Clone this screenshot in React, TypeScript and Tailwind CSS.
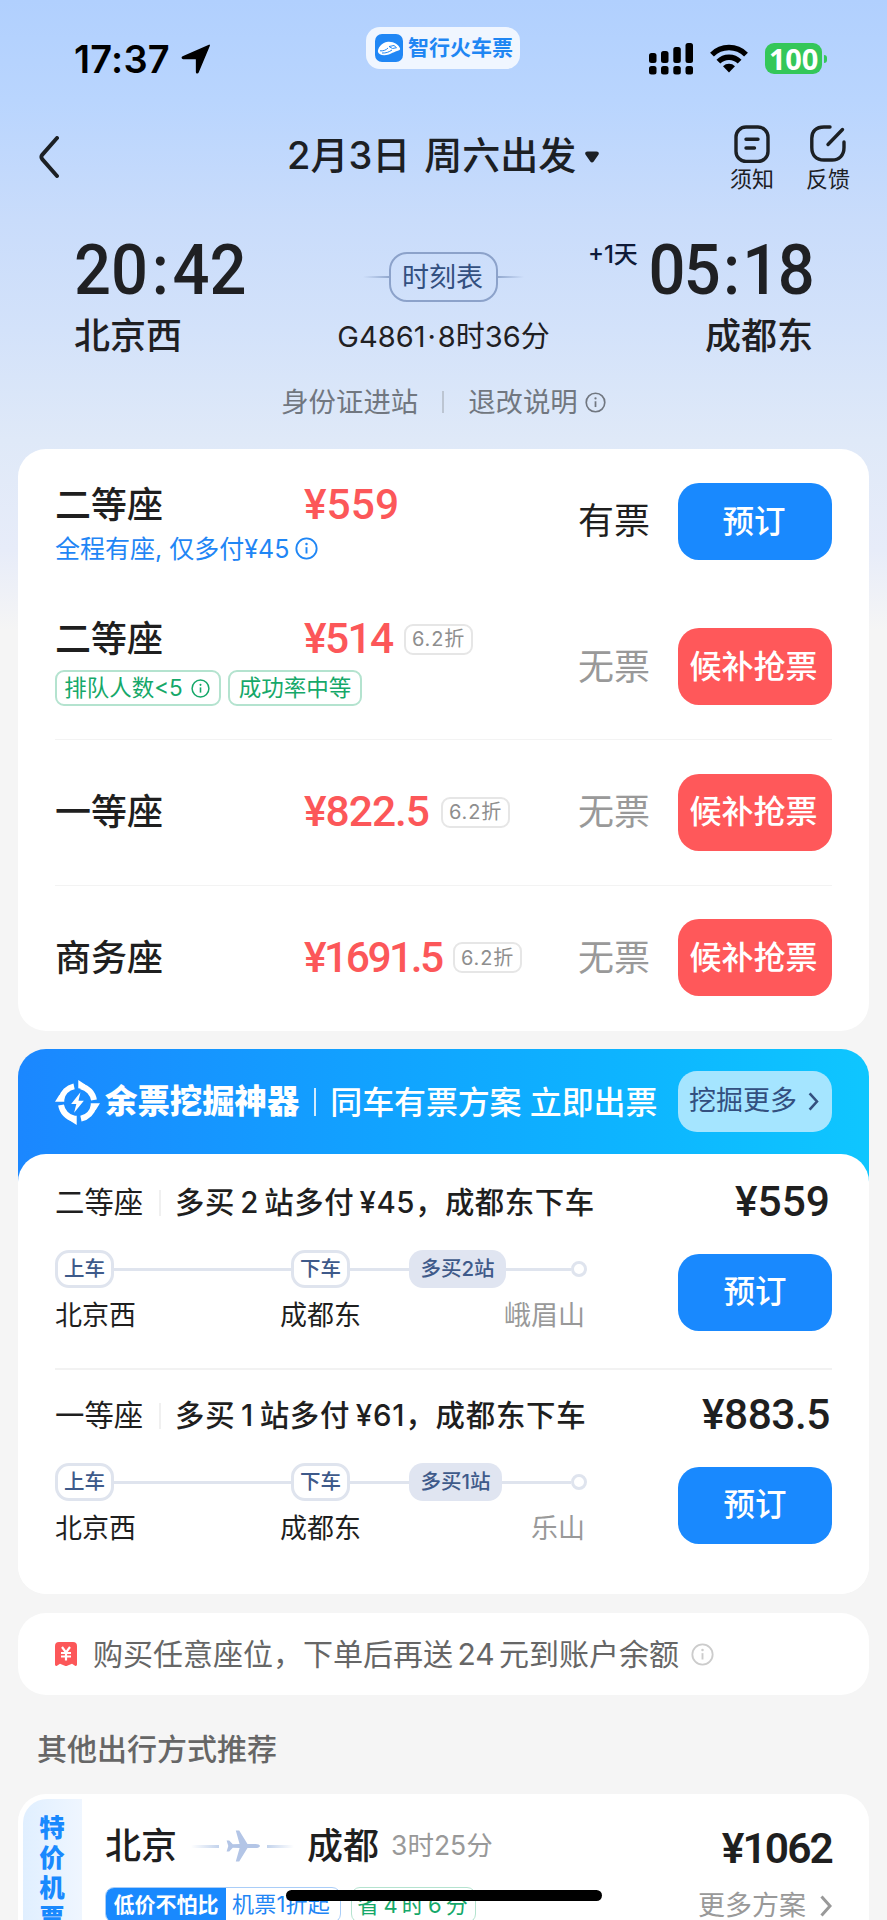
import type { ReactNode } from 'react'

interface Seat {
  name: string
  price: string
  priceClass: string
  discount?: string
  available: boolean
  extra?: ReactNode
  divider?: boolean
}

interface Plan {
  seat: string
  title: string
  titleClass: string
  price: string
  priceClass: string
  more: string
  moreClass: string
  last: string
}

function InfoIcon({ className }: { className?: string }) {
  return (
    <svg viewBox="0 0 24 24" fill="none" stroke="currentColor" strokeWidth="1.9" className={className}>
      <circle cx="12" cy="12" r="10.6" />
      <path d="M12 10.6v6.6" strokeWidth="2" />
      <circle cx="12" cy="7.4" r="1.3" fill="currentColor" stroke="none" />
    </svg>
  )
}

function Chevron({ className }: { className?: string }) {
  return (
    <svg viewBox="0 0 12 22" fill="none" stroke="currentColor" strokeWidth="3" className={className}>
      <path d="M1.5 1.5l8.5 9.5-8.5 9.5" />
    </svg>
  )
}

// Hours and minutes with a little air around the colon
function Clock({ value }: { value: string }) {
  const [hours, minutes] = value.split(':')
  return (
    <>
      {hours}
      <span className="mx-[4px]">:</span>
      {minutes}
    </>
  )
}

function StatusBar() {
  return (
    <div className="flex h-[96px] shrink-0 items-start">
      <div className="ml-[74px] mt-[37px] flex w-[292px] items-center">
        <span className="text-[38px] font-semibold leading-[44px] tracking-[0.2px] text-black">17:37</span>
        <svg viewBox="0 0 30 30" className="ml-[11px] size-[30px]">
          <path d="M28.2 1.4L17 28.2c-.4.900-1.400.800-1.400-.3V15.400a1 1 0 0 0-1-1H2.200c-1 0-1.200-1-.3-1.400z" fill="#000" stroke="#000" strokeWidth="1.500" strokeLinejoin="round" />
        </svg>
      </div>
      <div className="mt-[27px] flex h-[42px] w-[154px] items-center rounded-[14px] bg-[#f0f6ff] pl-[9px]">
        <svg viewBox="0 0 28 28" className="size-[28px]">
          <rect width="28" height="28" rx="7" fill="#2087f5" />
          <path d="M3 18c-.6-3 3-9.500 10-10.200 6-.4 10.500 2.800 12 6.400.6 1.700-.8 2.200-3 2.800-4 1.200-8 4.400-13 4.200C5.800 21 3.500 20 3 18z" fill="#fff" />
          <path d="M14 12.500l5-1 2.500 2.200-4 .8zM5 16.800c3 .4 6-.6 8-2.800M7 19c4 .3 7-1 10-3" fill="none" stroke="#2087f5" strokeWidth="1" />
        </svg>
        <span className="ml-[5px] text-[21px] font-bold leading-[30px] text-[#1f86f3]">智行火车票</span>
      </div>
      <svg viewBox="0 0 44 32" className="ml-[129px] mt-[43px] h-[32px] w-[44px]">
        <rect x="0" y="10" width="7.500" height="10" rx="2.500" />
        <rect x="12" y="8" width="7.500" height="12" rx="2.500" />
        <rect x="24.300" y="4" width="7.500" height="16" rx="2.500" />
        <rect x="36.500" y="0" width="7.500" height="20" rx="2.500" />
        <rect x="0" y="23" width="7.500" height="8.500" rx="2.500" />
        <rect x="12" y="23" width="7.500" height="8.500" rx="2.500" />
        <rect x="24.300" y="23" width="7.500" height="8.500" rx="2.500" />
        <rect x="36.500" y="23" width="7.500" height="8.500" rx="2.500" />
      </svg>
      <svg viewBox="0 0 38 29" className="ml-[17px] mt-[44px] h-[29px] w-[38px]" fill="none" stroke="#000" strokeWidth="5.400">
        <path d="M2 10.600a24 24 0 0 1 34 0" />
        <path d="M8.400 17.600a15 15 0 0 1 21.200 0" />
        <path d="M19 28.500l-6-6.300a8.600 8.600 0 0 1 12 0z" fill="#000" stroke="none" />
      </svg>
      <div className="ml-[17px] mt-[43px] flex h-[31px] w-[57px] items-center justify-center rounded-[9px] bg-[#34c759]">
        <span className="font-['Noto_Sans'] text-[29px] font-bold leading-[31px] tracking-[-0.3px] text-white">100</span>
      </div>
      <div className="ml-[2px] mt-[55px] h-[8px] w-[3px] rounded-r-full bg-[#34c759]" />
    </div>
  )
}

function NavBar() {
  return (
    <div className="flex h-[124px] shrink-0 items-start text-[#1c2024]">
      <svg viewBox="0 0 20 42" className="ml-[39px] mt-[40px] h-[42px] w-[20px]" fill="none" stroke="currentColor" strokeWidth="3.900" strokeLinecap="round" strokeLinejoin="round">
        <path d="M18 2L3.400 18.600q-2 2.400 0 4.800L18 40" />
      </svg>
      <div className="ml-[228px] mt-[31px] flex w-[443px] items-center">
        <h1 className="whitespace-nowrap text-[38px] font-medium leading-[56px] [word-spacing:4px]">2月3日 周六出发</h1>
        <svg viewBox="0 0 14 12" className="ml-[9px] mt-[4px] h-[12px] w-[14px]">
          <path d="M2.500 0.500h9c2.200 0 3 2 1.700 3.500L8.700 10.500c-.9 1.300-2.500 1.300-3.400 0L.8 4C-.5 2.500.3.500 2.500.5z" fill="currentColor" />
        </svg>
      </div>
      <div className="mt-[29px] flex w-[44px] flex-col items-center">
        <svg viewBox="0 0 36 38" className="h-[38px] w-[36px]" fill="none" stroke="currentColor" strokeWidth="3.400" strokeLinecap="round">
          <rect x="2" y="2" width="32" height="34.500" rx="10" />
          <path d="M12 14.300h12M12 23h8.500" />
        </svg>
        <span className="mt-[2px] whitespace-nowrap text-[22px] leading-[28px]">须知</span>
      </div>
      <div className="ml-[32px] mt-[29px] flex w-[44px] flex-col items-center">
        <svg viewBox="0 0 36 38" className="h-[38px] w-[36px]" fill="none" stroke="currentColor" strokeWidth="3.400" strokeLinecap="round">
          <path d="M20 2h-6C6 2 1.800 6.200 1.800 13.200v9.300c0 7.500 4.200 12.500 12.200 12.500h8c7.500 0 12-5 12-12.500V17" />
          <path d="M18 19.500L32.500 4.500" />
        </svg>
        <span className="mt-[2px] whitespace-nowrap text-[22px] leading-[28px]">反馈</span>
      </div>
    </div>
  )
}

function TripSummary() {
  return (
    <div className="h-[229px] shrink-0 text-[#1f2023]">
      <div className="flex h-[146px] justify-between px-[74px]">
        <div className="w-[222px]">
          <div className="mt-[9px] origin-left scale-x-[0.93] font-['Roboto'] text-[70px] font-medium leading-[82px]">
            <Clock value="20:42" />
          </div>
          <div className="text-[36px] font-medium leading-[50px]">北京西</div>
        </div>
        <div className="flex flex-col items-center">
          <div className="mt-[32px] flex items-center">
            <span className="h-[2px] w-[26px] bg-linear-to-r from-transparent to-[#93a9cf]" />
            <span className="flex h-[50px] w-[109px] items-center justify-center rounded-[18px] border-2 border-[#8ca2ca] pr-[2px] pt-[2px] text-[27px] text-[#33507f]">时刻表</span>
            <span className="h-[2px] w-[26px] bg-linear-to-r from-[#93a9cf] to-transparent" />
          </div>
          <div className="mt-[15px] whitespace-nowrap text-[29px] leading-[40px]">
            G4861<span className="mx-[2px]">·</span>8时36分
          </div>
        </div>
        <div className="flex w-[222px] flex-col items-end">
          <div className="mt-[9px] flex">
            <span className="-mr-[2px] mt-[11px] whitespace-nowrap text-[24px] font-medium leading-[30px] text-[#0e1a38]">+1天</span>
            <span className="origin-right scale-x-[0.93] font-['Roboto'] text-[70px] font-medium leading-[82px] tracking-[-1.700px]">
              <Clock value="05:18" />
            </span>
          </div>
          <div className="text-[36px] font-medium leading-[50px]">成都东</div>
        </div>
      </div>
      <div className="mt-[16px] flex items-center justify-center text-[27.400px] leading-[40px] text-[#717780]">
        <span>身份证进站</span>
        <span className="mx-[24px] h-[22px] w-[2px] bg-[#bcc5d2]" />
        <span>退改说明</span>
        <InfoIcon className="ml-[7px] size-[21px]" />
      </div>
    </div>
  )
}

function SeatRow({ seat }: { seat: Seat }) {
  return (
    <div className={`flex h-[145.500px] items-center border-b ${seat.divider ? 'border-[#f3f3f3]' : 'border-transparent'}`}>
      <div className="w-[523px]">
        <div className="flex h-[50px] items-center">
          <span className="w-[249px] text-[36px] font-medium leading-[50px] text-[#1f1f1f]">{seat.name}</span>
          <span className={`font-['Roboto'] text-[42.500px] font-medium leading-[50px] text-[#fc5759] ${seat.priceClass}`}>{seat.price}</span>
          {seat.discount && (
            <span className="flex h-[31px] w-[69px] items-center justify-center rounded-[9px] border-2 border-[#e6e6e6] text-[20px] leading-[28px] tracking-[0.800px] text-[#8e8e8e]">
              {seat.discount}
            </span>
          )}
        </div>
        {seat.extra}
      </div>
      <span className={`w-[100px] text-[36px] ${seat.available ? 'text-[#1f1f1f]' : 'text-[#999]'}`}>
        {seat.available ? '有票' : '无票'}
      </span>
      {seat.available ? (
        <button className="h-[77px] w-[154px] rounded-[21px] bg-[#1989fe] pr-[2px] text-[31.500px] font-medium text-white">预订</button>
      ) : (
        <button className="h-[77px] w-[154px] rounded-[21px] bg-[#ff585a] pr-[3px] text-[32px] font-medium text-white">候补抢票</button>
      )}
    </div>
  )
}

const seats: Seat[] = [
  {
    name: '二等座',
    price: '¥559',
    priceClass: '',
    available: true,
    extra: (
      <div className="-mb-[4px] mt-[1px] flex items-center text-[25px] leading-[36px] text-[#1f86f5]">
        <span className="whitespace-nowrap">全程有座, 仅多付¥45</span>
        <InfoIcon className="ml-[6px] size-[23px]" />
      </div>
    ),
  },
  {
    name: '二等座',
    price: '¥514',
    priceClass: 'w-[100px] tracking-[-1.600px]',
    discount: '6.2折',
    available: false,
    divider: true,
    extra: (
      <div className="mb-[13px] mt-[6px] flex gap-[7px] text-[22.500px] text-[#15a869]">
        <span className="flex h-[36px] w-[166px] items-center justify-center whitespace-nowrap rounded-[9px] border-2 border-[#b4e3cf] pr-[2px]">
          排队人数&lt;5
          <InfoIcon className="ml-[8px] size-[19px]" />
        </span>
        <span className="flex h-[36px] w-[134px] items-center justify-center whitespace-nowrap rounded-[9px] border-2 border-[#b4e3cf]">
          成功率中等
        </span>
      </div>
    ),
  },
  {
    name: '一等座',
    price: '¥822.5',
    priceClass: 'w-[137px] tracking-[-1px]',
    discount: '6.2折',
    available: false,
    divider: true,
  },
  {
    name: '商务座',
    price: '¥1691.5',
    priceClass: 'w-[149px] tracking-[-2.500px]',
    discount: '6.2折',
    available: false,
  },
]

const plans: Plan[] = [
  {
    seat: '二等座',
    title: '多买 2 站多付 ¥45，成都东下车',
    titleClass: 'tracking-[0.550px]',
    price: '¥559',
    priceClass: '',
    more: '多买2站',
    moreClass: 'w-[97px]',
    last: '峨眉山',
  },
  {
    seat: '一等座',
    title: '多买 1 站多付 ¥61，成都东下车',
    titleClass: 'tracking-[0.800px]',
    price: '¥883.5',
    priceClass: 'tracking-[-0.500px]',
    more: '多买1站',
    moreClass: 'w-[93px]',
    last: '乐山',
  },
]

function PlanRow({ plan }: { plan: Plan }) {
  return (
    <div className="h-[213px] text-[#1f1f1f]">
      <div className="flex h-[44px] items-center whitespace-nowrap text-[29.400px]">
        <span className="w-[104px] font-normal">{plan.seat}</span>
        <span className="h-[26px] w-[2px] bg-[#f0f0f0]" />
        <span className={`ml-[14px] font-medium [word-spacing:-3px] ${plan.titleClass}`}>{plan.title}</span>
        <span className={`-mt-[3px] ml-auto mr-[2px] font-['Roboto'] text-[42.500px] font-medium leading-[44px] ${plan.priceClass}`}>{plan.price}</span>
      </div>
      <div className="flex">
        <div className="w-[532px] pt-[25px]">
          <div className="flex h-[38px] items-center text-[20.500px] font-medium text-[#3e5a8a]">
            <span className="flex h-[38px] w-[59px] items-center justify-center rounded-[14px] border-[3px] border-[#dfe4ee]">上车</span>
            <span className="h-[3px] w-[177px] bg-[#dfe4ee]" />
            <span className="flex h-[38px] w-[59px] items-center justify-center rounded-[14px] border-[3px] border-[#dfe4ee]">下车</span>
            <span className="h-[3px] w-[59px] bg-[#dfe4ee]" />
            <span className={`flex h-[38px] items-center justify-center rounded-[14px] bg-[#e0e5f1] ${plan.moreClass}`}>{plan.more}</span>
            <span className="h-[3px] flex-1 bg-[#dfe4ee]" />
            <span className="size-[16px] rounded-full border-[3px] border-[#dfe4ee]" />
          </div>
          <div className="mt-[9px] flex h-[38px] items-center pr-[2px] text-[27px]">
            <span className="w-[225px]">北京西</span>
            <span>成都东</span>
            <span className="ml-auto text-[#999]">{plan.last}</span>
          </div>
        </div>
        <button className="ml-auto mt-[29px] h-[77px] w-[154px] rounded-[21px] bg-[#1989fe] pb-[2px] text-[31.500px] font-medium text-white">预订</button>
      </div>
    </div>
  )
}

function TicketFinder() {
  return (
    <section className="mt-[18px] h-[545px] shrink-0 overflow-hidden rounded-[28px] bg-white bg-linear-to-r from-[#1b87ff] to-[#0fc6ff] bg-[length:100%_150px] bg-no-repeat">
      <div className="flex h-[105px] items-center whitespace-nowrap pl-[37px] pt-[1px] text-white">
        <svg viewBox="0 0 46 46" className="size-[45px]" fill="none">
          <g stroke="#fff" strokeWidth="6">
            <path d="M26.500 6.400A17 17 0 0 1 39.800 20.500" />
            <path d="M39.600 26.500A17 17 0 0 1 26.500 39.600" />
            <path d="M19.500 39.600A17 17 0 0 1 6.200 25.500" />
            <path d="M6.400 19.500A17 17 0 0 1 19.500 6.400" />
          </g>
          <g fill="#fff">
            <path d="M23.800 0l7 4.500-1 5-6-1zM46 23.800L41.500 31l-5-1v-6.200zM22.200 46L15 41.500l1-5h6.200zM0 22.200L4.500 15l5 1v6.200z" />
            <path d="M26 12.500L16.500 24.500h5.300L19.500 33.500 29.500 21.300h-5.500z" />
          </g>
        </svg>
        <span className="ml-[5px] text-[32.400px] font-black">余票挖掘神器</span>
        <span className="ml-[15px] mr-[14px] h-[28px] w-[2px] bg-white/80" />
        <span className="mt-[1px] text-[32px] font-medium tracking-[-0.150px]">同车有票方案 立即出票</span>
        <button className="-mt-[2px] ml-auto mr-[37px] flex h-[61px] w-[154px] items-center rounded-[19px] bg-[#a5e5ff] pl-[11px] pt-[1px] text-[27px] text-[#33507f]">
          挖掘更多
          <Chevron className="ml-[11px] h-[19px] w-[11px]" />
        </button>
      </div>
      <div className="h-[440px] rounded-t-[28px] bg-white px-[37px] pt-[27px]">
        <PlanRow plan={plans[0]} />
        <div className="-mt-[26px] mb-[24px] h-[2px] bg-[#f2f2f2]" />
        <PlanRow plan={plans[1]} />
      </div>
    </section>
  )
}

function CashbackNotice() {
  return (
    <section className="mt-[19px] flex h-[82px] shrink-0 items-center rounded-[28px] bg-white pl-[37px] text-[30px] text-[#666]">
      <svg viewBox="0 0 22 24" className="h-[24px] w-[22px]">
        <path d="M4 0h14a4 4 0 0 1 4 4v18.500c0 1.200-1 1.800-2 1.200L17 21.800l-4.800 1.900a3 3 0 0 1-2.400 0L5 21.800l-3 1.900c-1 .6-2 0-2-1.200V4a4 4 0 0 1 4-4z" fill="#fc5759" />
        <path d="M7 5l4 5.500L15 5M6 11h10M6 14.500h10M11 10.500v8" fill="none" stroke="#fff" strokeWidth="2.200" />
      </svg>
      <span className="ml-[16px] whitespace-nowrap [word-spacing:-4px]">购买任意座位，下单后再送 24 元到账户余额</span>
      <InfoIcon className="ml-[12px] size-[23px] text-[#ccc]" />
    </section>
  )
}

function FlightCard() {
  return (
    <section className="mt-[19px] flex h-[200px] shrink-0 rounded-[28px] bg-white pl-[5px] pt-[5px]">
      <div className="flex w-[59px] flex-col items-center rounded-tl-[24px] bg-linear-to-r from-[#e0efff] to-[#eff6ff] pr-[1px] pt-[14px] text-[25.500px] font-black leading-[30px] text-[#1989fe]">
        <span>特</span>
        <span>价</span>
        <span>机</span>
        <span>票</span>
      </div>
      <div className="ml-[23px] w-[727px]">
        <div className="mt-[21px] flex h-[52px] items-center whitespace-nowrap">
          <span className="w-[86px] text-[36px] font-medium text-[#1f1f1f]">北京</span>
          <span className="h-[3px] w-[28px] bg-linear-to-r from-transparent to-[#c3d3ec]" />
          <svg viewBox="0 0 34 34" className="mx-[7px] size-[34px]" fill="#b3c5e6">
            <path d="M34 17c0 1.300-2.200 2.100-4.500 2.100h-8L13.200 32.600H9.800L13.600 19.100 6.800 18.800 3.200 22.600H.6L2.300 17 .6 11.400h2.600L6.800 15.200l6.800-.3L9.800 1.400h3.400l8.300 13.500h8c2.300 0 4.500.8 4.500 2.100z" />
          </svg>
          <span className="h-[3px] w-[27px] bg-linear-to-r from-[#c3d3ec] to-transparent" />
          <span className="ml-[13px] text-[36px] font-medium text-[#1f1f1f]">成都</span>
          <span className="ml-[12px] text-[26.500px] text-[#999]">3时25分</span>
          <span className="ml-auto mt-[5px] font-['Roboto'] text-[42.500px] font-semibold tracking-[-1.900px] text-[#1f1f1f]">¥1062</span>
        </div>
        <div className="mt-[15px] flex whitespace-nowrap">
          <div className="flex h-[36px] w-[236px] overflow-hidden rounded-[9px] border border-[#a9cdf8] text-[22px] text-[#1f86f5]">
            <span className="flex w-[120px] items-center justify-center bg-[#1989fe] text-[21px] font-bold text-white">低价不怕比</span>
            <span className="ml-[6px] leading-[33px] tracking-[0.200px]">机票1折起</span>
          </div>
          <div className="ml-[10px] flex h-[36px] w-[125px] items-center justify-center rounded-[9px] border border-[#b4e3cf] pr-[2px] text-[22px] text-[#15a869] [word-spacing:-2px]">
            省 4 时 6 分
          </div>
          <div className="ml-auto flex h-[37px] items-center pt-[1px] text-[27px] text-[#999]">
            更多方案
            <Chevron className="ml-[14px] h-[22px] w-[12px]" />
          </div>
        </div>
      </div>
    </section>
  )
}

export default function App() {
  return (
    <div className="relative flex h-[1920px] w-[887px] flex-col overflow-hidden bg-[#f5f5f5] bg-[linear-gradient(180deg,#b1d0fe_0px,#b9d5fe_100px,#c9dcfb_220px,#d3e2fa_330px,#dfe9f8_440px,#e7ecf9_550px,#f5f5f5_630px)] font-['Inter','Noto_Sans_CJK_SC',sans-serif]">
      <StatusBar />
      <NavBar />
      <TripSummary />
      <main className="flex flex-col px-[18px]">
        <section className="h-[582px] shrink-0 rounded-[28px] bg-white px-[37px]">
          {seats.map((seat, i) => (
            <SeatRow key={i} seat={seat} />
          ))}
        </section>
        <TicketFinder />
        <CashbackNotice />
        <h2 className="mt-[32px] h-[48px] pl-[19px] text-[30px] font-medium leading-[44px] text-[#666]">其他出行方式推荐</h2>
        <FlightCard />
      </main>
      <div className="absolute bottom-[19px] left-[286px] h-[11px] w-[316px] rounded-full bg-black" />
    </div>
  )
}
